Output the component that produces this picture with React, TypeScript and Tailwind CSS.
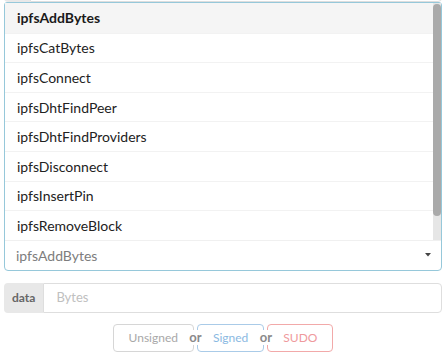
import React from "react";

const items = [
  "ipfsAddBytes",
  "ipfsCatBytes",
  "ipfsConnect",
  "ipfsDhtFindPeer",
  "ipfsDhtFindProviders",
  "ipfsDisconnect",
  "ipfsInsertPin",
  "ipfsRemoveBlock",
];

function LabeledInput({ label, placeholder }: { label: string; placeholder: string }) {
  return (
    <div className="flex h-[30px]">
      <div className="flex items-center rounded-l-[4px] bg-[#e8e8e8] px-[8px] text-[12px] font-bold text-[#666]">
        {label}
      </div>
      <div className="flex flex-1 items-center rounded-r-[4px] border border-[#dedede] pl-[12px] text-[13px] text-[#c0c0c0]">
        {placeholder}
      </div>
    </div>
  );
}

// "or" sits over the touching button borders
function Or() {
  return (
    <span className="relative z-10 flex w-[3px] justify-center self-center">
      <span className="shrink-0 bg-white px-[2px] text-[13px] font-bold leading-[15px] text-[#8a8a8a]">or</span>
    </span>
  );
}

export default function App() {
  return (
    <div className="h-[356px] w-[448px] overflow-hidden bg-white font-['Lato',sans-serif]">
      <div className="ml-[4px] w-[438px]">
        <div className="-mt-[28px]">
          <LabeledInput label="id" placeholder="address" />
        </div>

        <div className="rounded-t-[3px] rounded-b-[4px] border border-[#96c8da]">
          <div className="flex">
            <div className="flex-1">
              {items.map((item, i) => (
                <div
                  key={item}
                  className={
                    i === 0
                      ? "flex h-[29.6px] items-center bg-[#f5f5f5] pl-[12px] text-[14px] font-bold text-[#1a1a1a]"
                      : "flex h-[29.6px] items-center border-t border-[#f2f2f2] pl-[12px] text-[14px] text-[#222]"
                  }
                >
                  {item}
                </div>
              ))}
            </div>
            <div className="flex w-[8px] flex-col bg-[#e6e6e6]">
              <div className="mt-[1px] h-[212px] rounded-[4px] bg-[#aaaaaa]" />
            </div>
          </div>
          <div className="flex h-[30px] items-center justify-between border-t border-[#f0f0f0] pl-[11px] pr-[10px] text-[14px] text-[#7d7d7d]">
            <span>ipfsAddBytes</span>
            <svg width="6" height="4" viewBox="0 0 6 4">
              <polygon points="0,0 6,0 3,3.5" fill="#444" />
            </svg>
          </div>
        </div>

        <div className="mt-[12px]">
          <LabeledInput label="data" placeholder="Bytes" />
        </div>

        <div className="mt-[11px] flex justify-center">
          <button className="h-[28px] rounded-[4px] border border-[#d6d6d6] px-[15px] text-[12px] text-[#a8a8a8]">
            Unsigned
          </button>
          <Or />
          <button className="h-[28px] rounded-[4px] border border-[#aacbe8] px-[15px] text-[12px] text-[#8bb9e2]">
            Signed
          </button>
          <Or />
          <button className="h-[28px] rounded-[4px] border border-[#f2a9a9] px-[15px] text-[12px] text-[#ef9a9d]">
            SUDO
          </button>
        </div>
      </div>
    </div>
  );
}
